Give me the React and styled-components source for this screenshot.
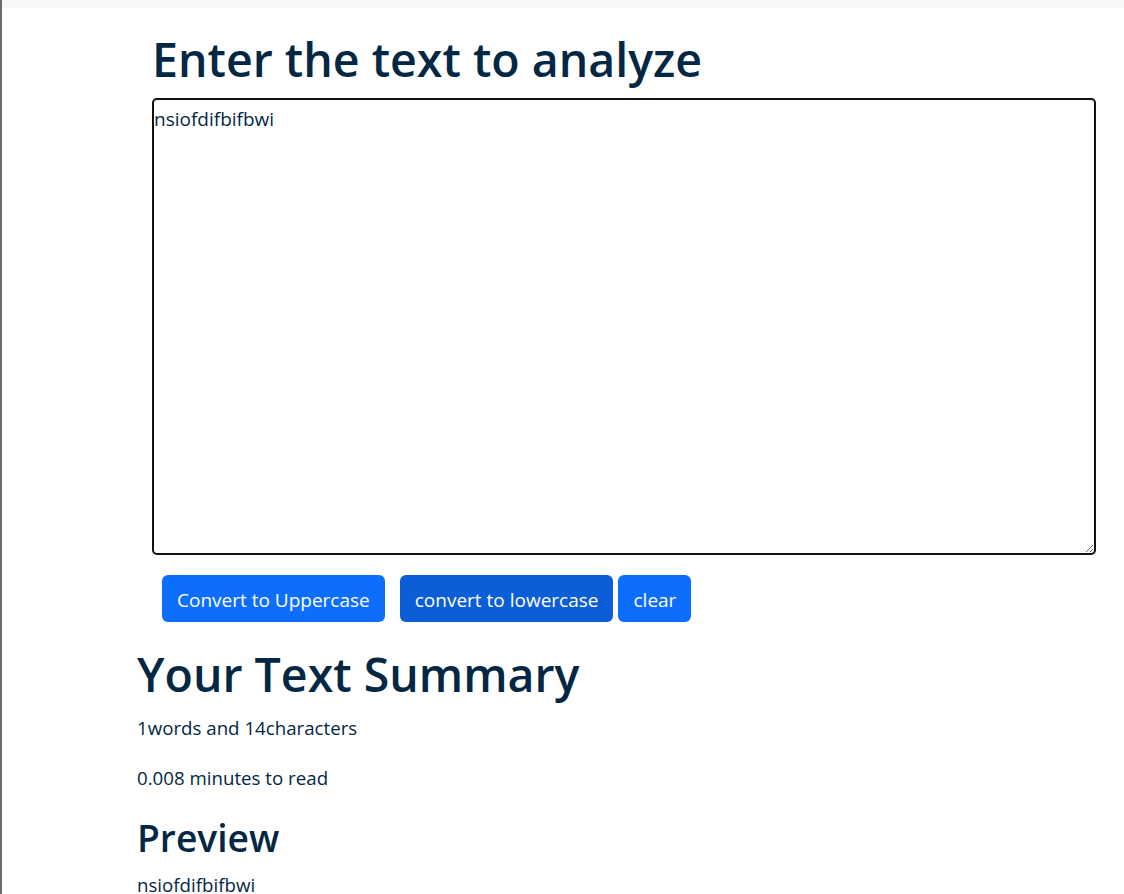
import { useState } from "react";
import styled, { createGlobalStyle } from "styled-components";

const GlobalStyle = createGlobalStyle`
  body {
    margin: 0;
    background: #fff;
    font-family: "Open Sans", "Noto Sans", sans-serif;
    color: #042743;
  }
`;

const Frame = styled.div`
  min-height: 894px;
  border-left: 2px solid #6b6b6b;
  box-sizing: border-box;
`;

const TopStrip = styled.div`
  height: 8px;
  background-color: #f7f8f9;
`;

const Container = styled.div`
  padding-left: 135px;
`;

const FormSection = styled.div`
  padding-left: 15px;
`;

const Heading = styled.h1`
  font-size: 46.5px;
  font-weight: 600;
  line-height: 1.2;
  margin: ${(p) => p.$margin || "0"};
  color: #042743;
`;

const SubHeading = styled.h2`
  font-size: 37.2px;
  font-weight: 600;
  line-height: 1.2;
  margin: 0 0 12px;
  color: #042743;
`;

const TextArea = styled.textarea`
  display: block;
  width: 944px;
  height: 457px;
  box-sizing: border-box;
  border: 2px solid #111;
  border-radius: 5px;
  padding: 6px 0 0;
  font-family: "Open Sans", "Noto Sans", sans-serif;
  font-size: 19px;
  line-height: 1.4;
  color: #042743;
  outline: none;
`;

const ButtonRow = styled.div`
  display: flex;
  align-items: center;
  margin-top: 20px;
  padding-left: 10px;
`;

const Button = styled.button`
  height: 47px;
  padding: 3px 15px 0;
  margin-right: ${(p) => p.$gap || 0}px;
  border: none;
  border-radius: 6px;
  background-color: ${(p) => (p.$active ? "#0b5ed7" : "#0d6efd")};
  color: #fff;
  font-family: "Open Sans", "Noto Sans", sans-serif;
  font-size: 19px;
  cursor: pointer;
`;

const Para = styled.p`
  font-size: 18.7px;
  margin: 0 0 26px;
  line-height: 1.3;
`;

const App = () => {
  const [text, setText] = useState("nsiofdifbifbwi");
  const words = text.split(/\s+/).filter((w) => w.length > 0).length;

  return (
    <>
      <GlobalStyle />
      <Frame>
        <TopStrip />
        <Container>
          <FormSection>
            <Heading $margin="24px 0 10px">Enter the text to analyze</Heading>
            <TextArea
              value={text}
              spellCheck={false}
              onChange={(e) => setText(e.target.value)}
            />
            <ButtonRow>
              <Button $gap={15} onClick={() => setText(text.toUpperCase())}>
                Convert to Uppercase
              </Button>
              <Button $gap={5} $active onClick={() => setText(text.toLowerCase())}>
                convert to lowercase
              </Button>
              <Button onClick={() => setText("")}>clear</Button>
            </ButtonRow>
          </FormSection>
          <Heading $margin="25px 0 13px">Your Text Summary</Heading>
          <Para>
            {words}words and {text.length}characters
          </Para>
          <Para>{0.008 * words} minutes to read</Para>
          <SubHeading>Preview</SubHeading>
          <Para>{text}</Para>
        </Container>
      </Frame>
    </>
  );
};

export default App;
